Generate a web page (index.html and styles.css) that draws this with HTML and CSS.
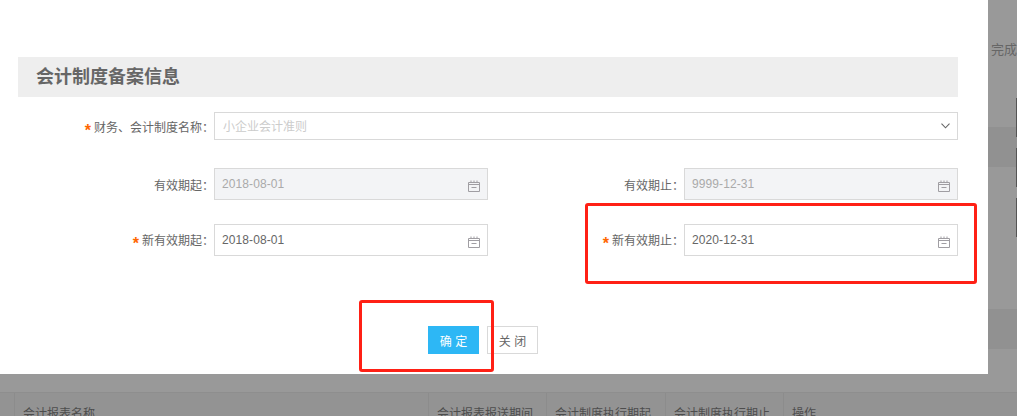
FILE: index.html
```html
<!DOCTYPE html>
<html lang="zh-CN">
<head>
<meta charset="utf-8">
<title>会计制度备案信息</title>
<link rel="stylesheet" href="styles.css">
</head>
<body>
<div class="page">
  <div class="bg-rows">
    <div class="bg-top"><span class="bg-done">完成</span></div>
    <div class="bg-band"></div>
    <div class="bg-gap"></div>
    <div class="bg-band"></div>
    <div class="bg-low"></div>
    <div class="bg-table">
      <div class="bg-cell c0"></div>
      <div class="bg-cell c1">会计报表名称</div>
      <div class="bg-cell c2">会计报表报送期间</div>
      <div class="bg-cell c3">会计制度执行期起</div>
      <div class="bg-cell c4">会计制度执行期止</div>
      <div class="bg-cell c5">操作</div>
    </div>
  </div>
  <div class="bg-marks">
    <i class="bg-mark"></i><i class="bg-mark"></i><i class="bg-mark"></i>
  </div>
</div>

<div class="modal">
  <h2 class="title">会计制度备案信息</h2>
  <div class="row row-select">
    <label class="label"><span class="req">*</span>财务、会计制度名称<span class="colon">：</span></label>
    <div class="field select">
      <span class="placeholder">小企业会计准则</span>
      <svg class="chev" width="9" height="6" viewBox="0 0 9 6"><path d="M.5.7 4.5 4.8 8.5.7" fill="none" stroke="#666" stroke-width="1.1"/></svg>
    </div>
  </div>
  <div class="row">
    <label class="label">有效期起<span class="colon">：</span></label>
    <div class="field date disabled"><span>2018-08-01</span>
      <svg class="cal" width="12" height="12" viewBox="0 0 12 12"><path d="M.5 2.5h11v9H.5zM.5 4.5h11M3 .5v2M6 .5v2M9 .5v2M3.5 7.5h5" fill="none" stroke="#a09ea3"/></svg>
    </div>
    <label class="label label-2">有效期止<span class="colon">：</span></label>
    <div class="field date disabled"><span>9999-12-31</span>
      <svg class="cal" width="12" height="12" viewBox="0 0 12 12"><path d="M.5 2.5h11v9H.5zM.5 4.5h11M3 .5v2M6 .5v2M9 .5v2M3.5 7.5h5" fill="none" stroke="#a09ea3"/></svg>
    </div>
  </div>
  <div class="row">
    <label class="label"><span class="req">*</span>新有效期起<span class="colon">：</span></label>
    <div class="field date"><span>2018-08-01</span>
      <svg class="cal" width="12" height="12" viewBox="0 0 12 12"><path d="M.5 2.5h11v9H.5zM.5 4.5h11M3 .5v2M6 .5v2M9 .5v2M3.5 7.5h5" fill="none" stroke="#a09ea3"/></svg>
    </div>
    <label class="label label-2"><span class="req">*</span>新有效期止<span class="colon">：</span></label>
    <div class="field date"><span>2020-12-31</span>
      <svg class="cal" width="12" height="12" viewBox="0 0 12 12"><path d="M.5 2.5h11v9H.5zM.5 4.5h11M3 .5v2M6 .5v2M9 .5v2M3.5 7.5h5" fill="none" stroke="#a09ea3"/></svg>
    </div>
  </div>
  <div class="actions">
    <button class="btn primary">确 定</button>
    <button class="btn">关 闭</button>
  </div>
</div>

<div class="mark mark-date"></div>
<div class="mark mark-btn"></div>
</body>
</html>
```
FILE: styles.css
```css
* { box-sizing: border-box; }
html, body { margin: 0; height: 416px; overflow: hidden; }
body {
  background: #999;
  font: 12px "Liberation Sans", "Noto Sans CJK SC", sans-serif;
  color: #666;
}
.page { position: relative; width: 1017px; height: 416px; overflow: hidden; }

.bg-rows { display: flex; flex-direction: column; height: 416px; overflow: hidden; }
.bg-rows > * { flex: none; }
.bg-top { height: 127px; padding: 43px 0 0 991px; white-space: nowrap; }
.bg-done { font-size: 13px; line-height: 14px; color: #666; }
.bg-band { height: 40px; background: #919191; }
.bg-gap { height: 142px; }
.bg-low { height: 43px; }
.bg-table {
  height: 40px;
  display: flex;
  background: #939393;
  border-top: 1px solid #8e8e8e;
  color: #4d4d4d;
}
.bg-cell { padding: 14px 0 0 8px; border-left: 1px solid #8c8c8c; line-height: 14px; white-space: nowrap; }
.c0 { width: 14px; padding: 0; border-left: 0; }
.c1 { width: 414px; }
.c2 { width: 118px; }
.c3 { width: 119px; }
.c4 { width: 118px; }
.c5 { flex: 1; }

.bg-marks {
  position: absolute;
  left: 1016px;
  top: 98px;
  display: flex;
  flex-direction: column;
  gap: 11px;
}
.bg-mark { display: block; width: 1px; height: 39px; background: #555; }

.modal {
  position: absolute;
  left: 0;
  top: 0;
  width: 988px;
  height: 374px;
  background: #fff;
  padding: 57px 30px 0 18px;
}
.title {
  margin: 0;
  height: 40px;
  padding-left: 18px;
  background: #eee;
  font-size: 18px;
  font-weight: 700;
  line-height: 40px;
  color: #666;
}
.row { display: flex; align-items: center; height: 32px; margin-top: 24px; }
.row-select { height: 28px; margin-top: 15px; margin-bottom: 28px; }
.row-select + .row { margin-top: 0; }
.row-select .label { padding-top: 2px; }
.label { width: 196px; flex: none; text-align: right; white-space: nowrap; color: #666; }
.label-2 { width: 196px; }
.colon { font-family: "Noto Sans CJK TC", sans-serif; }
.req { color: #f60; margin-right: 3px; font-size: 16px; font-weight: 700; line-height: 12px; vertical-align: -4px; }
.field {
  display: flex;
  align-items: center;
  justify-content: space-between;
  border: 1px solid #d9d9d9;
  background: #fff;
  color: #666;
  padding: 0 7px;
}
.select { flex: 1; height: 28px; padding-left: 8px; }
.placeholder { color: #ccc; position: relative; top: -1px; }
.date { width: 274px; height: 32px; }
.date span { letter-spacing: .1px; }
.disabled { background: #f3f4f6; color: #aaa; }
.cal { flex: none; margin-top: 3px; }
.chev { flex: none; margin-top: -1px; }
.actions { display: flex; justify-content: flex-start; gap: 8px; margin-top: 70px; padding-left: 410px; }
.btn {
  width: 51px;
  height: 28px;
  padding: 0;
  border: 1px solid #d9d9d9;
  background: #fff;
  font: inherit;
  color: #666;
}
.primary { background: #2db7f5; border-color: #2db7f5; color: #fff; }

.mark {
  position: absolute;
  border: 3px solid #ff2015;
  border-radius: 3px;
}
.mark-date { left: 585px; top: 203px; width: 392px; height: 81px; }
.mark-btn { left: 359px; top: 300px; width: 135px; height: 72px; }
```
